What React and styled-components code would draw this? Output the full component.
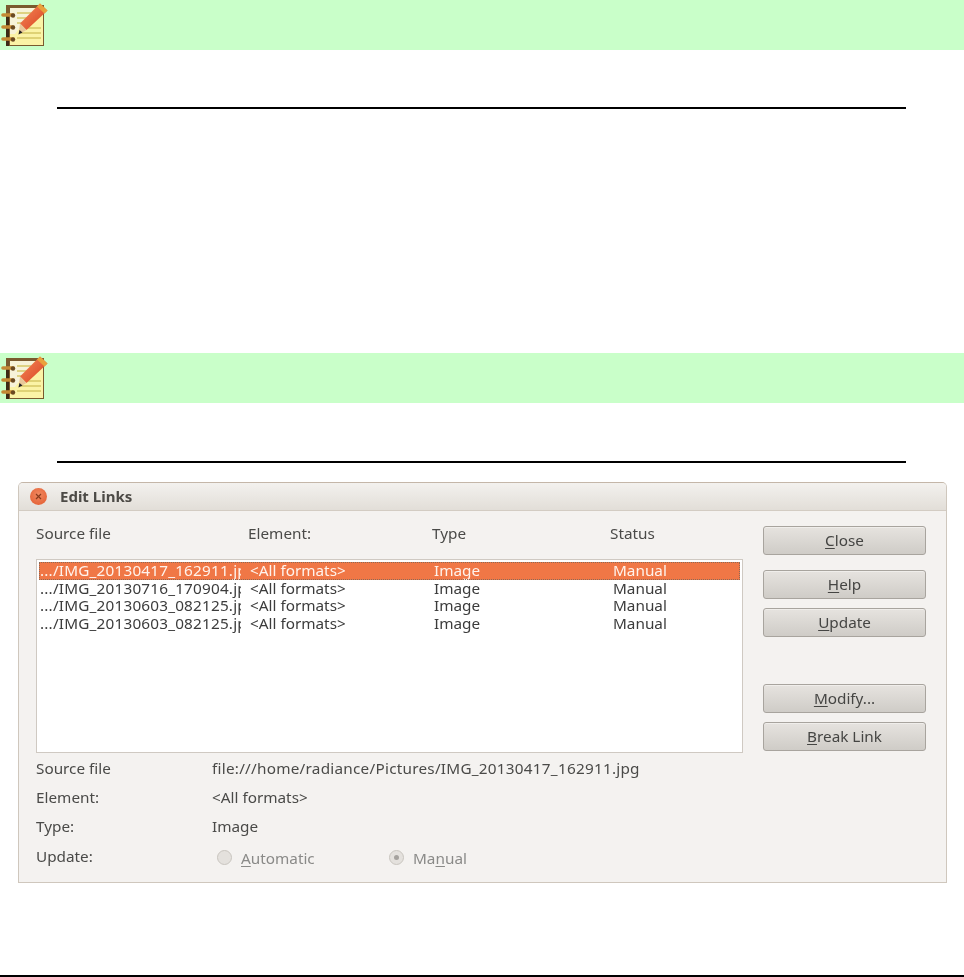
import React from "react";
import styled, { createGlobalStyle } from "styled-components";

const GlobalStyle = createGlobalStyle`
  html, body {
    margin: 0;
    padding: 0;
    background: #fff;
  }
  body {
    font-family: "Noto Sans", "DejaVu Sans", sans-serif;
  }
`;

const links = [
  { file: ".../IMG_20130417_162911.jpg", element: "<All formats>", type: "Image", status: "Manual" },
  { file: ".../IMG_20130716_170904.jpg", element: "<All formats>", type: "Image", status: "Manual" },
  { file: ".../IMG_20130603_082125.jpg", element: "<All formats>", type: "Image", status: "Manual" },
  { file: ".../IMG_20130603_082125.jpg", element: "<All formats>", type: "Image", status: "Manual" },
];

const Page = styled.div`
  width: 964px;
  height: 977px;
  overflow: hidden;
  display: flex;
  flex-direction: column;
`;

const NoteBar = styled.div`
  height: 50px;
  flex: none;
  background: #c9ffc9;
  display: flex;
  align-items: flex-start;
`;

const Rule = styled.div`
  flex: none;
  height: 2px;
  margin: ${(p) => p.$top}px ${(p) => (p.$full ? "0" : "58px")} 0 ${(p) => (p.$full ? "0" : "57px")};
  background: #000;
`;

const Spacer = styled.div`
  flex: none;
  height: ${(p) => p.$h}px;
`;

const Dialog = styled.div`
  flex: none;
  box-sizing: border-box;
  width: 929px;
  height: 401px;
  margin: 19px 0 0 18px;
  background: #f4f2f0;
  border: 1px solid #cfc7bd;
  border-top-color: #c4b6a8;
  border-radius: 5px 5px 0 0;
  color: #4a4a48;
  font-size: 15.3px;
  filter: blur(0.25px);
`;

const TitleBar = styled.div`
  height: 28px;
  box-sizing: border-box;
  display: flex;
  align-items: center;
  gap: 13px;
  padding-left: 11px;
  background: linear-gradient(#f3f1ee, #e2ded8);
  border-bottom: 1px solid #d3ccc3;
  border-radius: 4px 4px 0 0;
`;

const CloseDot = styled.div`
  width: 17px;
  height: 17px;
  border-radius: 50%;
  background: radial-gradient(circle at 50% 40%, #f08a62, #e2582c);
  display: flex;
  align-items: center;
  justify-content: center;
`;

const Title = styled.div`
  font-weight: 700;
  font-size: 15px;
  line-height: 18px;
  margin-top: -1px;
  color: #4c4a46;
`;

const Body = styled.div`
  display: grid;
  grid-template-columns: 707px 163px;
  column-gap: 20px;
  padding: 14px 0 0 17px;
`;

const Main = styled.div`
  display: flex;
  flex-direction: column;
`;

const Columns = styled.div`
  display: grid;
  grid-template-columns: 212px 184px 178px 1fr;
  height: 18px;
  line-height: 16px;
`;

const ListBox = styled.div`
  box-sizing: border-box;
  height: 194px;
  margin-top: 16px;
  padding: 2px 2px 0;
  background: #fff;
  border: 1px solid #cfc9c2;
  color: #3c3c3c;
`;

const ListRow = styled.div`
  display: grid;
  grid-template-columns: 201px 175px 170px 1fr;
  column-gap: 9px;
  height: 17.67px;
  line-height: 16px;
  box-sizing: border-box;
  padding-left: 1px;
  background: ${(p) => (p.$selected ? "#f07746" : "transparent")};
  color: ${(p) => (p.$selected ? "#fff3ec" : "inherit")};
  outline: ${(p) => (p.$selected ? "1px dotted #8a6a58" : "none")};
  outline-offset: -1px;
`;

const Cell = styled.div`
  white-space: nowrap;
`;

const FileCell = styled(Cell)`
  overflow-x: clip;
  letter-spacing: 0.2px;
`;

const Details = styled.div`
  display: grid;
  grid-template-columns: 176px 1fr;
  grid-auto-rows: 29.3px;
  align-items: center;
`;

const DetailValue = styled.div`
  white-space: nowrap;
  letter-spacing: ${(p) => p.$spread || 0}px;
`;

const RadioGroup = styled.div`
  display: flex;
  align-items: center;
  padding: 4px 0 0 5px;
  color: #8a8a88;
`;

const RadioItem = styled.label`
  display: flex;
  align-items: center;
  gap: 9px;
  width: 172px;
`;

const RadioDot = styled.span`
  box-sizing: border-box;
  width: 15px;
  height: 15px;
  border-radius: 50%;
  border: 1px solid #c9c5bf;
  background: #e4e1dd;
  display: flex;
  align-items: center;
  justify-content: center;
  &::after {
    content: "";
    display: ${(p) => (p.$on ? "block" : "none")};
    width: 5px;
    height: 5px;
    border-radius: 50%;
    background: #a5a29e;
  }
`;

const Actions = styled.div`
  display: flex;
  flex-direction: column;
  margin-top: 1px;
`;

const Button = styled.button`
  box-sizing: border-box;
  width: 163px;
  height: 29px;
  margin-top: ${(p) => p.$gap || 0}px;
  padding: 0 0 2px;
  font: inherit;
  color: #454543;
  border: 1px solid #a8a49e;
  border-radius: 3px;
  background: linear-gradient(#e6e3df, #cfccc7);
  box-shadow: inset 0 1px 0 #f0eeeb;
`;

const Key = styled.span`
  text-decoration: underline;
  text-underline-offset: 2px;
`;

const NoteIcon = () => (
  <svg width="48" height="50" viewBox="0 0 48 50">
    <defs>
      <filter id="soft" x="-5%" y="-5%" width="110%" height="110%">
        <feGaussianBlur stdDeviation="0.5" />
      </filter>
      <linearGradient id="pencil" x1="0" y1="0" x2="1" y2="1">
        <stop offset="0" stopColor="#f58a5a" />
        <stop offset="1" stopColor="#d8401f" />
      </linearGradient>
    </defs>
    <g filter="url(#soft)">
      <rect x="6" y="5" width="38" height="41" fill="#7a5a2e" />
      <rect x="10" y="8" width="33" height="37" fill="#fbf3a6" />
      <path d="M10 8h25L15 34l-5 0z" fill="#f7f3d8" />
      <rect x="6" y="16" width="3" height="30" fill="#3c2a12" />
      <path d="M17 13h14M17 18h10M17 23h8M24 28h17M21 33h20M17 38h24" stroke="#d6c765" strokeWidth="1.4" fill="none" />
      <path d="M3 15h10M3 27h10M3 39h10" stroke="#c48a35" strokeWidth="3.6" strokeLinecap="round" />
      <circle cx="13" cy="15.500" r="2.200" fill="#6a4a20" />
      <circle cx="13" cy="27.500" r="2.200" fill="#6a4a20" />
      <circle cx="13" cy="39.500" r="2.200" fill="#6a4a20" />
      <path d="M40 3.500L47.500 10.500L26.500 30L20 23.500z" fill="url(#pencil)" />
      <path d="M40 3.500L47.500 10.500L44.500 13.500L37 6.500z" fill="#e9a23a" />
      <path d="M20 23.500L26.500 30L18.500 34.500z" fill="#e8c89a" />
      <path d="M19.500 30L22.500 32.500L18.500 34.500z" fill="#222" />
    </g>
  </svg>
);

const App = () => (
  <Page>
    <GlobalStyle />
    <NoteBar>
      <NoteIcon />
    </NoteBar>
    <Rule $top={57} />
    <Spacer $h={244} />
    <NoteBar>
      <NoteIcon />
    </NoteBar>
    <Rule $top={58} />
    <Dialog>
      <TitleBar>
        <CloseDot>
          <svg width="9" height="9" viewBox="0 0 9 9">
            <path d="M2 2l5 5M7 2l-5 5" stroke="#8a3a1c" strokeWidth="1.2" />
          </svg>
        </CloseDot>
        <Title>Edit Links</Title>
      </TitleBar>
      <Body>
        <Main>
          <Columns>
            <div>Source file</div>
            <div>Element:</div>
            <div>Type</div>
            <div>Status</div>
          </Columns>
          <ListBox>
            {links.map((link, i) => (
              <ListRow key={i} $selected={i === 0}>
                <FileCell>{link.file}</FileCell>
                <Cell>{link.element}</Cell>
                <Cell>{link.type}</Cell>
                <Cell>{link.status}</Cell>
              </ListRow>
            ))}
          </ListBox>
          <Details>
            <div>Source file</div>
            <DetailValue $spread={0.25}>file:///home/radiance/Pictures/IMG_20130417_162911.jpg</DetailValue>
            <div>Element:</div>
            <DetailValue>&lt;All formats&gt;</DetailValue>
            <div>Type:</div>
            <DetailValue>Image</DetailValue>
            <div>Update:</div>
            <RadioGroup>
              <RadioItem>
                <RadioDot />
                <span><Key>A</Key>utomatic</span>
              </RadioItem>
              <RadioItem>
                <RadioDot $on />
                <span>Ma<Key>n</Key>ual</span>
              </RadioItem>
            </RadioGroup>
          </Details>
        </Main>
        <Actions>
          <Button><Key>C</Key>lose</Button>
          <Button $gap={15}><Key>H</Key>elp</Button>
          <Button $gap={9}><Key>U</Key>pdate</Button>
          <Button $gap={47}><Key>M</Key>odify...</Button>
          <Button $gap={9}><Key>B</Key>reak Link</Button>
        </Actions>
      </Body>
    </Dialog>
    <Spacer $h={92} />
    <Rule $top={0} $full />
  </Page>
);

export default App;
